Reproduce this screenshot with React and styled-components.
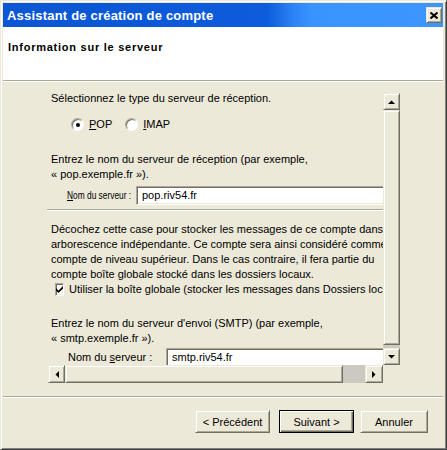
import React from 'react'
import styled, { createGlobalStyle, css } from 'styled-components'

const GlobalStyle = createGlobalStyle`
  html, body {
    margin: 0;
    padding: 0;
    background: #ece9d8;
  }
  body {
    font-family: "Liberation Sans", Arial, sans-serif;
    font-size: 11px;
    color: #000;
  }
  * {
    box-sizing: border-box;
  }
`

const raised = css`
  background: #ece9d8;
  border: 1px solid;
  border-color: #ece9d8 #716f64 #716f64 #ece9d8;
  box-shadow: inset 1px 1px #fff, inset -1px -1px #aca899;
`

const sunken = css`
  border: 1px solid;
  border-color: #aca899 #fff #fff #aca899;
  box-shadow: inset 1px 1px #716f64, inset -1px -1px #ece9d8;
`

const etched = css`
  height: 2px;
  border-top: 1px solid #aca899;
  border-bottom: 1px solid #fff;
`

const Window = styled.div`
  width: 447px;
  height: 450px;
  display: flex;
  flex-direction: column;
  padding: 2px 3px 3px 2px;
  border: 1px solid;
  border-color: #ece9d8 #404040 #404040 #ece9d8;
  box-shadow: inset 1px 1px #fff, inset -1px -1px #808080;
  background: #ece9d8;
`

const TitleBar = styled.div`
  height: 24px;
  flex: none;
  display: flex;
  align-items: center;
  justify-content: space-between;
  padding: 0 1px 0 4px;
  background: linear-gradient(
    to right,
    #0a56d4 0%,
    #0c5cdb 60%,
    #2b83f4 66%,
    #3a94ff 70%,
    #3d96ff 100%
  );
`

const Title = styled.span`
  color: #fff;
  font-weight: bold;
  font-size: 13px;
  letter-spacing: 0.2px;
`

const CloseButton = styled.span`
  ${raised};
  width: 16px;
  height: 16px;
  display: flex;
  align-items: center;
  justify-content: center;
`

const Header = styled.div`
  height: 53px;
  flex: none;
  background: #fff;
  padding: 13px 5px 0;
  font-weight: bold;
  letter-spacing: 0.75px;
  line-height: 15px;
`

const Separator = styled.div`
  ${etched};
  flex: none;
`

const Body = styled.div`
  height: 314px;
  flex: none;
  padding: 9px 43px 0 44px;
`

const ScrollPanel = styled.div`
  height: 292px;
  display: grid;
  grid-template-columns: 1fr 17px;
  grid-template-rows: 1fr 18px;
`

const Viewport = styled.div`
  overflow: hidden;
  padding-left: 4px;
  white-space: nowrap;
  line-height: 15px;
`

const Para = styled.p`
  margin: ${p => p.$top || 0}px 0 0;
`

const RadioRow = styled.div`
  margin-top: 11px;
  padding-left: 20px;
  height: 15px;
  display: flex;
  align-items: center;
`

const Choice = styled.label`
  display: flex;
  align-items: center;
  gap: 5px;
  margin-right: ${p => p.$gap || 0}px;
`

const Radio = styled.span`
  width: 13px;
  height: 13px;
  border-radius: 50%;
  background: #fff;
  border: 1px solid;
  border-color: #aca899 #fff #fff #aca899;
  box-shadow: inset 1px 1px #716f64;
  display: flex;
  align-items: center;
  justify-content: center;

  &::after {
    content: '';
    width: 4px;
    height: 4px;
    border-radius: 50%;
    background: #000;
    display: ${p => (p.$checked ? 'block' : 'none')};
  }
`

const FieldRow = styled.div`
  margin-top: ${p => p.$top}px;
  padding-left: ${p => p.$indent}px;
  display: flex;
  align-items: center;
`

const FieldLabel = styled.span`
  width: ${p => p.$width}px;
  flex: none;
  overflow: hidden;
`

const Squeezed = styled.span`
  display: inline-block;
  transform: scaleX(${p => p.$ratio});
  transform-origin: left center;
`

const TextBox = styled.div`
  ${sunken};
  background: #fff;
  width: 270px;
  height: 19px;
  flex: none;
  padding: 1px 5px 0;
  line-height: 15px;
`

const Rule = styled.div`
  ${etched};
  margin: ${p => p.$top}px 0 0 -4px;
`

const CheckRow = styled.label`
  display: flex;
  align-items: center;
  gap: 5px;
  height: 15px;
  padding-left: 4px;
`

const CheckBox = styled.span`
  ${sunken};
  width: 13px;
  height: 13px;
  background: #fff;
  display: flex;
  align-items: center;
  justify-content: center;
`

const VScroll = styled.div`
  padding-top: 2px;
  display: flex;
  flex-direction: column;
`

const HScroll = styled.div`
  padding-left: 1px;
  display: flex;
`

const ArrowButton = styled.span`
  ${raised};
  flex: none;
  width: ${p => p.$w}px;
  height: ${p => p.$h}px;
  display: flex;
  align-items: center;
  justify-content: center;
`

const Thumb = styled.span`
  ${raised};
  flex: 1;
`

const Track = styled.span`
  flex: ${p => `0 0 ${p.$size}px`};
  background: #cbc9c0;
`

const Corner = styled.div`
  background: #ece9d8;
`

const Footer = styled.div`
  flex: 1;
  display: flex;
  justify-content: flex-end;
  align-items: flex-start;
  padding: 12px 15px 0 0;
`

const Button = styled.button`
  ${raised};
  ${p =>
    p.$default &&
    css`
      border-color: #000;
      box-shadow: inset 1px 1px #fff, inset -1px -1px #716f64, inset -2px -2px #aca899;
    `}
  width: ${p => p.$w}px;
  height: 23px;
  margin-left: ${p => p.$gap || 0}px;
  padding: 0;
  font-family: "Liberation Sans", Arial, sans-serif;
  font-size: 11px;
  color: #000;
`

const Arrow = ({ dir }) => {
  const pts = {
    up: '0,4 7,4 3.5,0.5',
    down: '0,0 7,0 3.5,3.5',
    left: '4,0 4,7 0.5,3.5',
    right: '0,0 0,7 3.5,3.5',
  }[dir]
  const vertical = dir === 'up' || dir === 'down'
  return (
    <svg width={vertical ? 7 : 4} height={vertical ? 4 : 7} viewBox={vertical ? '0 0 7 4' : '0 0 4 7'}>
      <polygon points={pts} fill="#000" />
    </svg>
  )
}

const App = () => {
  return (
    <>
      <GlobalStyle />
      <Window>
        <TitleBar>
          <Title>Assistant de création de compte</Title>
          <CloseButton>
            <svg width="8" height="7" viewBox="0 0 8 7">
              <path d="M0.5 0.5 L7.5 6.5 M7.5 0.5 L0.5 6.5" stroke="#000" strokeWidth="2" />
            </svg>
          </CloseButton>
        </TitleBar>
        <Header>Information sur le serveur</Header>
        <Separator />
        <Body>
          <ScrollPanel>
            <Viewport>
              <Para>Sélectionnez le type du serveur de réception.</Para>
              <RadioRow>
                <Choice $gap={13}>
                  <Radio $checked />
                  <span><u>P</u>OP</span>
                </Choice>
                <Choice>
                  <Radio />
                  <span><u>I</u>MAP</span>
                </Choice>
              </RadioRow>
              <Para $top={20}>
                Entrez le nom du serveur de réception (par exemple,
                <br />« pop.exemple.fr »).
              </Para>
              <FieldRow $top={4} $indent={16}>
                <FieldLabel $width={69}>
                  <Squeezed $ratio={0.76}><u>N</u>om du serveur :</Squeezed>
                </FieldLabel>
                <TextBox>pop.riv54.fr</TextBox>
              </FieldRow>
              <Rule $top={4} />
              <Para $top={11}>
                Décochez cette case pour stocker les messages de ce compte dans une
                <br />arborescence indépendante. Ce compte sera ainsi considéré comme un
                <br />compte de niveau supérieur. Dans le cas contraire, il fera partie du
                <br />compte boîte globale stocké dans les dossiers locaux.
              </Para>
              <CheckRow>
                <CheckBox>
                  <svg width="7" height="7" viewBox="0 0 7 7">
                    <path d="M0 2 L0 4.5 L2.5 7 L7 2.5 L7 0 L2.5 4.5 Z" fill="#000" />
                  </svg>
                </CheckBox>
                <span>Utiliser la boîte globale (stocker les messages dans Dossiers locaux)</span>
              </CheckRow>
              <Para $top={19}>
                Entrez le nom du serveur d'envoi (SMTP) (par exemple,
                <br />« smtp.exemple.fr »).
              </Para>
              <FieldRow $top={2} $indent={17}>
                <FieldLabel $width={98}>Nom du <u>s</u>erveur :</FieldLabel>
                <TextBox>smtp.riv54.fr</TextBox>
              </FieldRow>
            </Viewport>
            <VScroll>
              <ArrowButton $w={17} $h={17}><Arrow dir="up" /></ArrowButton>
              <Thumb />
              <Track $size={3} />
              <ArrowButton $w={17} $h={17}><Arrow dir="down" /></ArrowButton>
            </VScroll>
            <HScroll>
              <ArrowButton $w={17} $h={18}><Arrow dir="left" /></ArrowButton>
              <Thumb />
              <Track $size={22} />
              <ArrowButton $w={18} $h={18}><Arrow dir="right" /></ArrowButton>
            </HScroll>
            <Corner />
          </ScrollPanel>
        </Body>
        <Separator />
        <Footer>
          <Button $w={75}>&lt; Précédent</Button>
          <Button $w={75} $gap={9} $default>Suivant &gt;</Button>
          <Button $w={68} $gap={6}>Annuler</Button>
        </Footer>
      </Window>
    </>
  )
}

export default App
